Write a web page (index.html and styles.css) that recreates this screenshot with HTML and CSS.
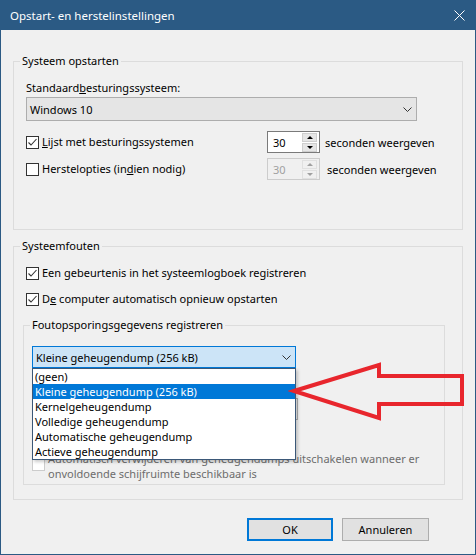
FILE: index.html
```html
<!DOCTYPE html>
<html lang="nl">
<head>
    <meta charset="UTF-8">
    <title>Opstart- en herstelinstellingen</title>
    <link rel="stylesheet" href="styles.css">
</head>
<body>
    <div class="window">
        <div class="titlebar">
            <span class="title">Opstart- en herstelinstellingen</span>
            <svg class="close" width="11" height="11" viewBox="0 0 11 11"><path d="M0.5 0.5 L10.5 10.5 M10.5 0.5 L0.5 10.5" stroke="#fff" stroke-width="1"/></svg>
        </div>
        <div class="content">
            <fieldset class="group startup">
                <legend>Systeem opstarten</legend>
                <div class="field-label">Standaard<u>b</u>esturingssysteem:</div>
                <div class="combo">
                    <span>Windows 10</span>
                    <svg class="chevron" width="9" height="5" viewBox="0 0 9 5"><path d="M0.5 0.5 L4.5 4.5 L8.5 0.5" fill="none" stroke="#333"/></svg>
                </div>
                <div class="opt-row">
                    <label class="check">
                        <span class="box"><svg width="11" height="11" viewBox="0 0 11 11"><path d="M1.5 5.5 L4 8 L9.5 2" fill="none" stroke="#333" stroke-width="1.1"/></svg></span>
                        <span><u>L</u>ijst met besturingssystemen</span>
                    </label>
                    <div class="spin">
                        <span class="val">30</span>
                        <div class="spin-btns">
                            <span class="spin-btn up"></span>
                            <span class="spin-btn down"></span>
                        </div>
                    </div>
                    <span class="unit">seconden weergeven</span>
                </div>
                <div class="opt-row second">
                    <label class="check">
                        <span class="box"></span>
                        <span>Herstelopties (in<u>d</u>ien nodig)</span>
                    </label>
                    <div class="spin disabled">
                        <span class="val">30</span>
                        <div class="spin-btns">
                            <span class="spin-btn up"></span>
                            <span class="spin-btn down"></span>
                        </div>
                    </div>
                    <span class="unit shifted">seconden weergeven</span>
                </div>
            </fieldset>

            <fieldset class="group errors">
                <legend>Systeemfouten</legend>
                <label class="check check-line">
                    <span class="box"><svg width="11" height="11" viewBox="0 0 11 11"><path d="M1.5 5.5 L4 8 L9.5 2" fill="none" stroke="#333" stroke-width="1.1"/></svg></span>
                    <span>Een <u>g</u>ebeurtenis in het systeemlogboek registreren</span>
                </label>
                <label class="check check-line next">
                    <span class="box"><svg width="11" height="11" viewBox="0 0 11 11"><path d="M1.5 5.5 L4 8 L9.5 2" fill="none" stroke="#333" stroke-width="1.1"/></svg></span>
                    <span>D<u>e</u> computer automatisch opnieuw opstarten</span>
                </label>

                <fieldset class="group debug">
                    <legend>Foutopsporingsgegevens registreren</legend>
                    <div class="combo-wrap">
                        <div class="combo focused">
                            <span>Kleine geheugendump (256 kB)</span>
                            <svg class="chevron" width="9" height="5" viewBox="0 0 9 5"><path d="M0.5 0.5 L4.5 4.5 L8.5 0.5" fill="none" stroke="#333"/></svg>
                        </div>
                        <ul class="listbox">
                            <li>(geen)</li>
                            <li class="selected">Kleine geheugendump (256 kB)</li>
                            <li>Kernelgeheugendump</li>
                            <li>Volledige geheugendump</li>
                            <li>Automatische geheugendump</li>
                            <li>Actieve geheugendump</li>
                        </ul>
                    </div>
                    <div class="textbox"></div>
                    <label class="check dim multi">
                        <span class="box"></span>
                        <span>Automatisch verwijderen van geheugendumps uitschakelen wanneer er onvoldoende schijfruimte beschikbaar is</span>
                    </label>
                </fieldset>
            </fieldset>
        </div>
        <div class="buttons">
            <button class="btn default">OK</button>
            <button class="btn">Annuleren</button>
        </div>

        <svg class="red-arrow" width="180" height="66" viewBox="288 358 180 66">
            <polygon points="294,391 379,365 379,376 462,376 462,404 379,404 379,418" fill="none" stroke="#e8262d" stroke-width="4"/>
        </svg>
    </div>
</body>
</html>
```

FILE: styles.css
```css
* {
    box-sizing: border-box;
}
body {
    margin: 0;
    font-family: "Noto Sans", "Open Sans", sans-serif;
    font-size: 11px;
    color: #000;
    background: #f0f0f0;
}
.window {
    position: relative;
    width: 476px;
    height: 555px;
    border: 1px solid #2b5a84;
    border-top: none;
    background: #f0f0f0;
    display: flex;
    flex-direction: column;
}
.titlebar {
    height: 30px;
    background: #2b5a84;
    color: white;
    display: flex;
    align-items: center;
    justify-content: space-between;
    padding: 0 10px 0 9px;
}
.title {
    font-size: 11.5px;
}
.content {
    padding: 23px 12px 0 12px;
}
.group {
    margin: 0;
    padding: 0 12px 49px 12px;
    border: 1px solid #dcdcdc;
}
.group legend {
    padding: 0 2px;
    margin-left: -6px;
    line-height: 16px;
}
.field-label {
    margin-top: 11px;
    line-height: 16px;
}
.combo {
    margin-top: 1px;
    width: 391px;
    height: 24px;
    background: #e5e5e5;
    border: 1px solid #adadad;
    display: flex;
    align-items: center;
    justify-content: space-between;
    padding: 0 4px 0 3px;
}
.opt-row {
    display: grid;
    grid-template-columns: 236px 53px auto;
    column-gap: 5px;
    align-items: center;
    height: 22px;
    margin-top: 10px;
}
.opt-row.second {
    margin-top: 5px;
}
.unit {
    white-space: nowrap;
}
.unit.shifted {
    margin-left: 2px;
}
.check {
    display: flex;
    align-items: center;
    gap: 3px;
    line-height: 16px;
}
.box {
    width: 13px;
    height: 13px;
    flex: none;
    border: 1px solid #333;
    background: white;
    display: flex;
    align-items: center;
    justify-content: center;
}
.spin {
    height: 22px;
    border: 1px solid #7a7a7a;
    background: white;
    display: flex;
    align-items: center;
}
.spin .val {
    flex: 1;
    padding-left: 5px;
}
.spin-btns {
    width: 15px;
    height: 20px;
    margin-right: 2px;
    display: flex;
    flex-direction: column;
    justify-content: center;
    gap: 1px;
}
.spin-btn {
    height: 9px;
    background: #e6e6e6;
    border: 1px solid #cfcfcf;
    position: relative;
}
.spin-btn::after {
    content: "";
    position: absolute;
    left: 4px;
    border-left: 3px solid transparent;
    border-right: 3px solid transparent;
}
.spin-btn.up::after {
    top: 2px;
    border-bottom: 3px solid #000;
}
.spin-btn.down::after {
    top: 2px;
    border-top: 3px solid #000;
}
.spin.disabled {
    border-color: #cccccc;
    background: #f0f0f0;
}
.spin.disabled .val {
    color: #a0a0a0;
}
.spin.disabled .spin-btn {
    background: #f0f0f0;
    border-color: #e0e0e0;
}
.spin.disabled .spin-btn.up::after {
    border-bottom-color: #a0a0a0;
}
.spin.disabled .spin-btn.down::after {
    border-top-color: #a0a0a0;
}
.errors {
    margin-top: 8px;
    padding-bottom: 14px;
}
.check-line {
    margin-top: 11px;
}
.check-line.next {
    margin-top: 10px;
}
.debug {
    margin: 10px 5px 0 -3px;
    padding: 0 8px 3px 8px;
}
.debug legend {
    margin-left: -2px;
}
.combo-wrap {
    position: relative;
    margin-top: 13px;
}
.combo.focused {
    margin-top: 0;
    width: 264px;
    height: 22px;
    background: #cce4f7;
    border-color: #0078d7;
}
.listbox {
    position: absolute;
    top: 100%;
    left: 0;
    z-index: 5;
    width: 264px;
    margin: 0;
    padding: 0;
    list-style: none;
    background: white;
    border: 1px solid #3b5878;
    box-shadow: 2px 2px 3px rgba(0, 0, 0, 0.2);
}
.listbox li {
    height: 15px;
    line-height: 15px;
    padding-left: 2px;
}
.listbox li.selected {
    background: #0078d7;
    color: white;
}
.textbox {
    margin-top: 30px;
    width: 266px;
    height: 22px;
    border: 1px solid #adadad;
    background: #f0f0f0;
}
.check.dim {
    color: #6d6d6d;
}
.check.dim .box {
    border-color: #cccccc;
}
.multi {
    margin-top: 31px;
    align-items: flex-start;
    line-height: 15px;
}
.multi .box {
    margin-top: 7px;
}
.buttons {
    display: flex;
    justify-content: flex-end;
    gap: 9px;
    padding: 18px 46px 0 0;
}
.btn {
    height: 23px;
    width: 87px;
    font-family: inherit;
    font-size: 11px;
    background: #e1e1e1;
    border: 1px solid #adadad;
    padding: 0;
}
.btn.default {
    width: 86px;
    border: 2px solid #0078d7;
}
.red-arrow {
    position: absolute;
    left: 287px;
    top: 358px;
    z-index: 10;
}
```
